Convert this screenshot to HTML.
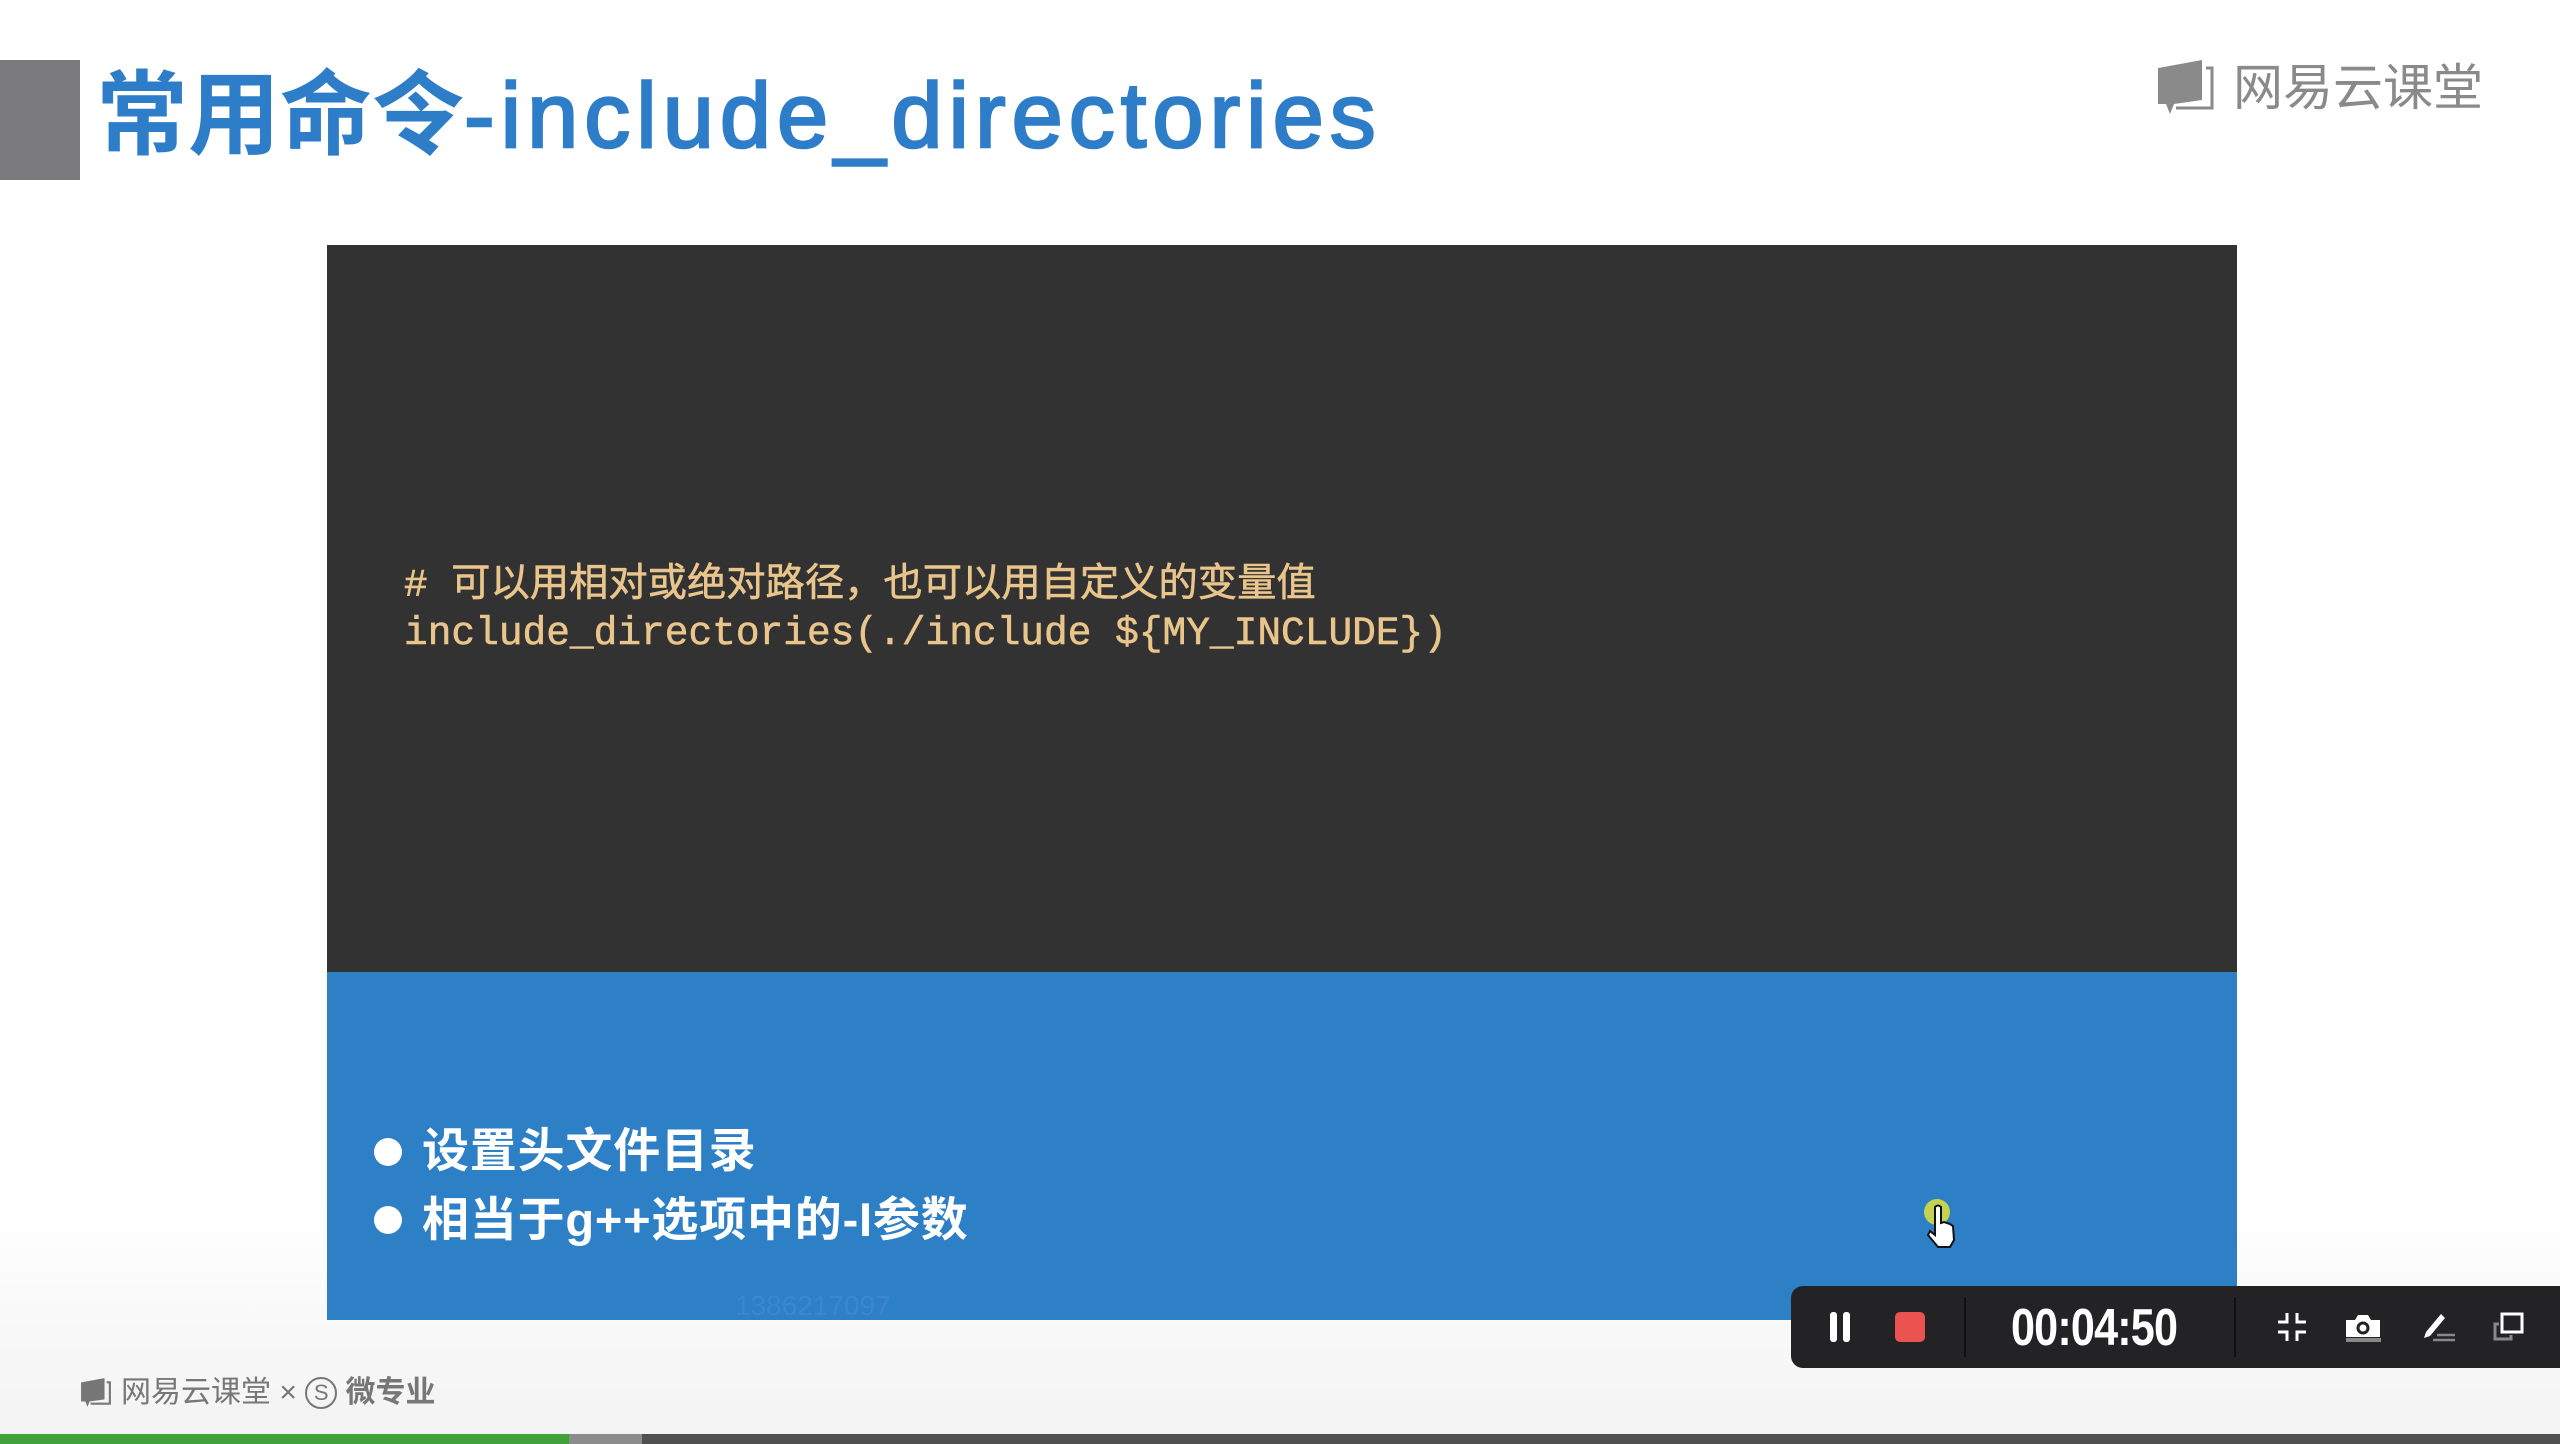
<!DOCTYPE html>
<html><head><meta charset="utf-8"><style>
*{margin:0;padding:0;box-sizing:border-box}
body{width:2560px;height:1444px;position:relative;overflow:hidden;background:#fff;font-family:"Liberation Sans","Noto Sans CJK SC",sans-serif}
.abs{position:absolute}
#bg{left:0;top:1200px;width:2560px;height:234px;background:linear-gradient(#fff,#f3f3f3)}
#gray{left:0;top:60px;width:80px;height:120px;background:#7b7b7f}
#title{left:96px;top:58px;font-size:92px;line-height:116px;color:#2e7dc8;font-weight:bold;white-space:nowrap}
#title .l{font-weight:normal;-webkit-text-stroke:2.5px #2e7dc8;letter-spacing:6px}
#logo{left:2233px;top:56px;font-size:50px;line-height:64px;color:#8a8a8a;white-space:nowrap}
#dark{left:327px;top:245px;width:1910px;height:727px;background:#323232}
#blue{left:327px;top:972px;width:1910px;height:348px;background:#2d7fc6}
.code{left:404px;font-family:"Liberation Mono","Noto Sans CJK SC",monospace;color:#e9c58c;white-space:nowrap;-webkit-text-stroke:0.6px #e9c58c}
.bul{left:374px;width:28px;height:28px;border-radius:50%;background:#fff}
.bt{left:422px;font-size:47px;line-height:60px;color:#fff;font-weight:bold;white-space:nowrap;letter-spacing:0.8px}
#tb{left:1791px;top:1286px;width:769px;height:82px;background:#232225;border-radius:12px 0 0 12px}
#foot{left:121px;top:1374px;font-size:30px;line-height:38px;color:#777;white-space:nowrap}
</style></head><body>
<div class="abs" id="bg"></div>
<div class="abs" id="gray"></div>
<div class="abs" id="title">常用命令<span class="l">-include_directories</span></div>
<svg class="abs" style="left:2156px;top:58px" width="60" height="60" viewBox="0 0 60 60"><path d="M2 10 L46 2 L46 42 L18 46 L14 56 L10 46 L2 46Z" fill="#8a8a8a"/><path d="M50 10 L56 10 L56 50 L20 50" fill="none" stroke="#8a8a8a" stroke-width="3"/></svg>
<div class="abs" id="logo">网易云课堂</div>
<div class="abs" id="dark"></div>
<div class="abs code" style="top:561px;font-size:39.3px;line-height:50px"># 可以用相对或绝对路径，也可以用自定义的变量值</div>
<div class="abs code" style="top:609px;font-size:39.5px;line-height:50px">include_directories(./include ${MY_INCLUDE})</div>
<div class="abs" id="blue"></div>
<div class="abs bul" style="top:1138px"></div>
<div class="abs bt" style="top:1121px">设置头文件目录</div>
<div class="abs bul" style="top:1206px"></div>
<div class="abs bt" style="top:1190px">相当于g++选项中的-I参数</div>
<div class="abs" style="left:735px;top:1290px;font-size:28px;color:#3a87cc">1386217097</div>
<svg class="abs" style="left:1920px;top:1195px" width="50" height="60" viewBox="0 0 50 60"><circle cx="17" cy="17" r="13" fill="#c5d24f"/><path d="M15 12 Q18 9 21 12 L21 28 L24 27 L27 28 L30 29 L33 31 L34 45 L30 52 L18 52 L8 40 L10 36 L15 40Z" fill="#fff" stroke="#111" stroke-width="2"/></svg>
<div class="abs" id="tb">
 <div class="abs" style="left:39px;top:26px;width:7px;height:30px;background:#fff;border-radius:3px"></div>
 <div class="abs" style="left:52px;top:26px;width:7px;height:30px;background:#fff;border-radius:3px"></div>
 <div class="abs" style="left:104px;top:26px;width:30px;height:30px;background:#ea5350;border-radius:5px"></div>
 <div class="abs" style="left:173px;top:11px;width:2px;height:60px;background:#111"></div>
 <div class="abs" style="left:220px;top:14px;font-size:52px;line-height:56px;color:#fff;font-weight:bold;transform:scaleX(0.83);transform-origin:left;letter-spacing:-1px">00:04:50</div>
 <div class="abs" style="left:443px;top:11px;width:2px;height:60px;background:#111"></div>
 <svg class="abs" style="left:485px;top:26px" width="32" height="30" viewBox="0 0 32 30"><path d="M2 10h9V1M30 10h-9V1M2 20h9v9M30 20h-9v9" fill="none" stroke="#fff" stroke-width="3"/></svg>
 <svg class="abs" style="left:554px;top:28px" width="36" height="29" viewBox="0 0 36 29"><path d="M1 6h9l3-5h10l3 5h9v17H1Z" fill="#fff"/><circle cx="18" cy="14" r="5" fill="none" stroke="#232225" stroke-width="3"/><rect x="1" y="24" width="35" height="4" fill="#888"/></svg>
 <svg class="abs" style="left:628px;top:26px" width="38" height="32" viewBox="0 0 38 32"><path d="M22 2 L7 20 L5 26 L11 24 L26 6Z" fill="#fff"/><path d="M14 28h22M18 23h18" stroke="#888" stroke-width="2.5"/></svg>
 <svg class="abs" style="left:701px;top:26px" width="32" height="30" viewBox="0 0 32 30"><rect x="10" y="2" width="20" height="18" fill="none" stroke="#fff" stroke-width="3"/><path d="M7 12H3v15h16v-4" fill="none" stroke="#888" stroke-width="3"/></svg>
</div>
<svg class="abs" style="left:80px;top:1377px" width="32" height="32" viewBox="0 0 60 60"><path d="M2 10 L46 2 L46 42 L18 46 L14 56 L10 46 L2 46Z" fill="#777"/><path d="M50 10 L56 10 L56 50 L20 50" fill="none" stroke="#777" stroke-width="4"/></svg>
<div class="abs" id="foot">网易云课堂 × <span style="display:inline-block;width:32px;height:32px;border:2px solid #777;border-radius:50%;text-align:center;line-height:28px;font-size:22px;vertical-align:2px">S</span> <b>微专业</b></div>
<div class="abs" style="left:0;top:1434px;width:2560px;height:10px;background:#505050"></div>
<div class="abs" style="left:0;top:1434px;width:642px;height:10px;background:#8c8c8c"></div>
<div class="abs" style="left:0;top:1434px;width:569px;height:10px;background:#3fa23a"></div>
</body></html>
